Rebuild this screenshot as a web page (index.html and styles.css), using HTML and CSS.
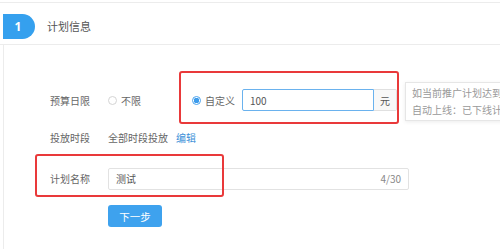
FILE: index.html
```html
<!DOCTYPE html>
<html lang="zh">
<head>
<meta charset="utf-8">
<link rel="stylesheet" href="styles.css">
</head>
<body>
<div class="page">
  <div class="header">
    <div class="badge">1</div>
    <div class="title">计划信息</div>
  </div>
  <div class="panel">
    <div class="form">
      <div class="row row-budget">
        <div class="label">预算日限</div>
        <label class="radio radio-plain"><span class="dot"></span>不限</label>
        <label class="radio radio-custom"><span class="dot on"></span>自定义</label>
        <div class="group">
          <div class="input focus">100</div>
          <div class="addon">元</div>
        </div>
        <div class="tip">如当前推广计划达到<br>自动上线：已下线计</div>
        <div class="mark mark-a"></div>
      </div>
      <div class="row row-time">
        <div class="label">投放时段</div>
        <span class="value">全部时段投放</span>
        <a class="link">编辑</a>
      </div>
      <div class="row row-name">
        <div class="label">计划名称</div>
        <div class="input wide"><span>测试</span><span class="count">4/30</span></div>
        <div class="mark mark-b"></div>
      </div>
      <div class="actions">
        <button class="btn">下一步</button>
      </div>
    </div>
  </div>
</div>
</body>
</html>
```
FILE: styles.css
```css
* { box-sizing: border-box; }
html, body { margin: 0; padding: 0; background: #fff; }
body {
  font-family: "Noto Sans CJK SC", "Noto Sans", sans-serif;
  font-size: 10px;
  color: #666;
  width: 500px;
  height: 249px;
  overflow: hidden;
}
.page {
  margin-top: 2px;
  border-top: 1px solid #ececec;
}
.header {
  height: 42px;
  border-bottom: 1px solid #ececec;
  display: flex;
  align-items: center;
  padding-left: 3px;
}
.badge {
  width: 32px;
  height: 25px;
  background: #35a0ee;
  border-radius: 0 13px 13px 0;
  color: #fff;
  font-family: "Open Sans", "Noto Sans", sans-serif;
  font-weight: 700;
  font-size: 12px;
  display: flex;
  align-items: center;
  justify-content: center;
  padding-right: 2px;
  margin-top: 6px;
}
.title {
  margin-left: 12px;
  margin-top: 5px;
  font-size: 11px;
  color: #555;
}
.panel {
  margin-left: 3px;
  border-left: 1px solid #ececec;
  height: 210px;
}
.form {
  padding-left: 46px;
  padding-top: 43px;
}
.row {
  position: relative;
  display: flex;
  align-items: center;
}
.label {
  width: 58px;
  flex: none;
  color: #666;
}
.row-budget { height: 24px; }
.row-time { height: 22px; margin-top: 14px; }
.row-name { height: 23px; margin-top: 19px; }
.radio {
  display: flex;
  align-items: center;
  color: #666;
  flex: none;
}
.radio-plain { width: 84px; }
.radio-custom { width: 50px; }
.dot {
  width: 9px;
  height: 9px;
  border-radius: 50%;
  border: 1px solid #d4d4d4;
  margin-right: 4px;
  background: #fff;
}
.dot.on {
  border-color: #4aa3ee;
  background: radial-gradient(circle, #3d9cec 0 2.6px, #fff 3px);
}
.group {
  display: flex;
  height: 22px;
}
.input {
  height: 22px;
  border: 1px solid #e2e2e2;
  border-radius: 2px;
  display: flex;
  align-items: center;
  padding-left: 7px;
  color: #555;
  background: #fff;
}
.input.focus {
  width: 132px;
  border-color: #6ab2ee;
  border-radius: 2px 0 0 2px;
}
.addon {
  width: 23px;
  border: 1px solid #e0e0e0;
  border-left: none;
  border-radius: 0 2px 2px 0;
  background: #f8f8f8;
  display: flex;
  align-items: center;
  justify-content: center;
  color: #555;
}
.tip {
  position: absolute;
  left: 355px;
  top: -6px;
  width: 120px;
  height: 39px;
  border: 1px solid #e6e6e6;
  border-right: none;
  box-shadow: 0 1px 4px rgba(0,0,0,0.08);
  background: #fff;
  padding: 1px 0 0 6px;
  line-height: 17px;
  color: #999;
  font-size: 10px;
  white-space: nowrap;
  overflow: hidden;
}
.value { color: #666; }
.link {
  margin-left: 8px;
  color: #3b8fd8;
}
.input.wide {
  width: 301px;
  justify-content: space-between;
  padding-right: 7px;
}
.count { color: #888; }
.mark {
  position: absolute;
  border: 2px solid #e9393a;
  border-radius: 3px;
  pointer-events: none;
}
.mark-a {
  left: 129px;
  top: -17px;
  width: 220px;
  height: 53px;
}
.mark-b {
  left: -15px;
  top: -13px;
  width: 189px;
  height: 43px;
}
.actions {
  margin-top: 15px;
  padding-left: 58px;
}
.btn {
  width: 54px;
  height: 22px;
  border: none;
  border-radius: 3px;
  background: #3ea2ee;
  color: #fff;
  font-family: "Noto Sans CJK SC", sans-serif;
  font-size: 10.5px;
  padding: 0;
}
```
